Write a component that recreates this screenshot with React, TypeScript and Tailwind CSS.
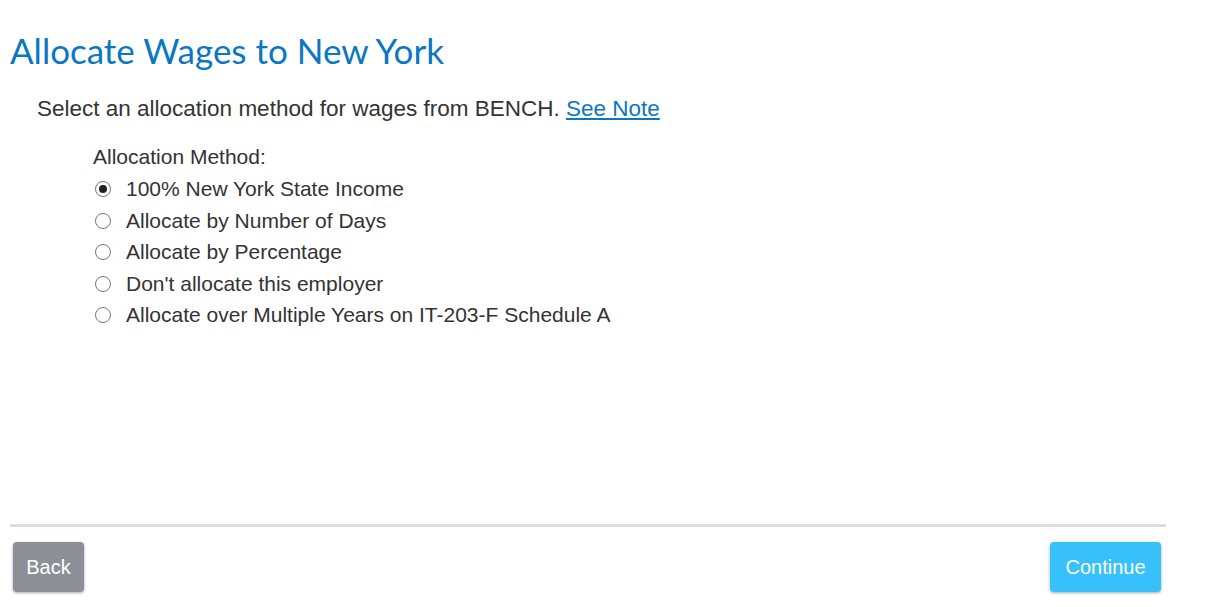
import React from 'react'

const options = [
  '100% New York State Income',
  'Allocate by Number of Days',
  'Allocate by Percentage',
  "Don't allocate this employer",
  'Allocate over Multiple Years on IT-203-F Schedule A',
]

function Radio({ checked }: { checked: boolean }) {
  return (
    <span className="flex h-[16px] w-[16px] items-center justify-center rounded-full border border-[#767676] bg-white">
      {checked && <span className="h-[8px] w-[8px] rounded-full bg-[#222]" />}
    </span>
  )
}

export default function App() {
  return (
    <div className="flex h-[607px] w-[1216px] flex-col bg-white font-['Liberation_Sans',Arial,sans-serif] text-[#333]">
      <h1 className="ml-[10px] mt-[29px] font-['Lato',sans-serif] text-[35px] leading-[42px] text-[#0a77c5]">
        Allocate Wages to New York
      </h1>
      <p className="ml-[37px] mt-[24px] text-[22.5px] leading-[28px]">
        Select an allocation method for wages from BENCH.{' '}
        <a href="#" className="text-[#0a77c5] underline">See Note</a>
      </p>
      <div className="ml-[95px] mt-[21px] text-[21px] leading-[26px]">
        <div className="-ml-[2px]">Allocation Method:</div>
        <div className="mt-[6px] flex flex-col gap-[5.5px]">
          {options.map((o, i) => (
            <label key={o} className="flex items-center gap-[15px]">
              <Radio checked={i === 0} />
              <span>{o}</span>
            </label>
          ))}
        </div>
      </div>
      <div className="mt-auto">
        <div className="ml-[10px] h-[3px] w-[1156px] bg-[#dddddd]" />
        <div className="flex w-[1166px] items-center justify-between pb-[15px] pl-[13px] pt-[15px] pr-[5px]">
          <button className="h-[50px] w-[71px] rounded-[4px] bg-[#8c8f96] text-[20px] text-white shadow-[0_1px_3px_rgba(0,0,0,0.35)]">
            Back
          </button>
          <button className="h-[50px] w-[111px] rounded-[4px] bg-[#38c0fb] text-[20px] text-white shadow-[0_1px_3px_rgba(0,0,0,0.35)]">
            Continue
          </button>
        </div>
      </div>
    </div>
  )
}
